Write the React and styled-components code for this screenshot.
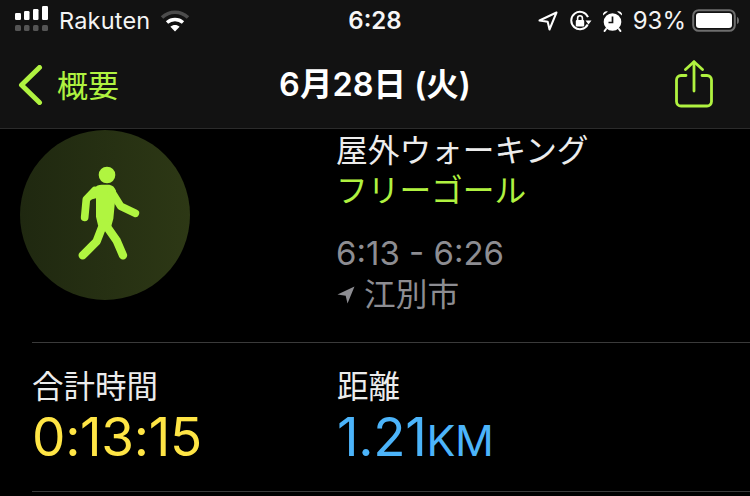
import React from "react";
import styled, { createGlobalStyle } from "styled-components";

const Global = createGlobalStyle`
  html, body { margin: 0; padding: 0; background: #000; }
  body { width: 750px; height: 496px; overflow: hidden; font-family: Inter, "Noto Sans CJK JP", sans-serif; }
`;
const CJK = `Inter, "Noto Sans CJK JP", sans-serif`;
const lime = "#b0f240";

const Page = styled.div`width:750px;height:496px;overflow:hidden;background:#000;display:flex;flex-direction:column;`;
const Header = styled.header`height:129px;box-sizing:border-box;background:#121212;border-bottom:1px solid #2b2b2b;display:flex;flex-direction:column;flex:none;`;
const StatusBar = styled.div`height:42px;display:grid;grid-template-columns:1fr auto 1fr;align-items:center;padding:0 10px;color:#fff;`;
const StatusLeft = styled.div`display:flex;align-items:center;padding-left:5px;`;
const StatusRight = styled.div`display:flex;align-items:center;justify-content:flex-end;`;
const Carrier = styled.span`font:400 23.5px/1 ${CJK};margin:0 10px 0 10px;letter-spacing:.2px;color:#f4f4f4;`;
const Clock = styled.span`font:600 24px/1 ${CJK};color:#f6f6f6;`;
const Percent = styled.span`font:400 24px/1 ${CJK};margin:0 6px 0 10px;color:#f4f4f4;`;
const NavBar = styled.nav`flex:1;display:grid;grid-template-columns:1fr auto 1fr;align-items:center;padding:0 18px;`;
const Back = styled.div`display:flex;align-items:center;gap:13px;color:${lime};font:400 31px/1 ${CJK};`;
const Title = styled.h1`margin:0;font:600 32.5px/1 ${CJK};color:#fff;`;
const ShareSlot = styled.div`display:flex;justify-content:flex-end;margin:0 19px 2px 0;`;

const Summary = styled.section`height:213px;box-sizing:border-box;flex:none;display:grid;grid-template-columns:316px 1fr;padding:1px 0 0 20px;`;
const Badge = styled.div`width:170px;height:170px;border-radius:50%;background:linear-gradient(90deg,#1f2810,#2d3815);`;
const Info = styled.div`display:flex;flex-direction:column;padding-top:1px;`;
const Line = styled.div`font:400 ${p=>p.$size||31.7}px/40px ${CJK};color:${p=>p.$color||"#ececec"};margin-top:${p=>p.$top||0}px;display:flex;align-items:center;gap:${p=>p.$gap||0}px;`;
const Rule = styled.hr`border:0;height:1px;background:#3a3a3a;margin:0 0 0 32px;flex:none;`;
const Stats = styled.section`height:148px;flex:none;box-sizing:border-box;display:grid;grid-template-columns:305px 1fr;padding:24px 0 0 32px;`;
const Stat = styled.div`display:flex;flex-direction:column;`;
const Label = styled.div`font:400 31.5px/40px ${CJK};color:#ececec;`;
const Value = styled.div`font:400 53px/60px ${CJK};color:${p=>p.$color};letter-spacing:-.3px;`;
const Unit = styled.span`font-size:43px;`;

const Signal = () => (
  <svg width="34" height="26" viewBox="0 0 34 26" style={{display:"block",marginBottom:4}} fill="#fff">
    <rect x="0" y="7" width="6" height="7" rx="1.2"/><rect x="9" y="5" width="5.5" height="9" rx="1.2"/>
    <rect x="18" y="3" width="5.5" height="11" rx="1.2"/><rect x="27" y="0" width="6" height="14" rx="1.2"/>
    <g fill="#555"><rect x="0" y="19" width="6" height="6" rx="1.5"/><rect x="9" y="19" width="5.5" height="6" rx="1.5"/><rect x="18" y="19" width="5.5" height="6" rx="1.5"/><rect x="27" y="19" width="6" height="6" rx="1.5"/></g>
  </svg>
);
const Wifi = () => (
  <svg width="30" height="24" viewBox="0 0 30 24" fill="none" strokeLinecap="butt">
    <path d="M2 8.5C9.5 1.5 20.5 1.5 28 8.5" stroke="#4c4c4c" strokeWidth="3.6"/>
    <path d="M7 13.5C11.5 9.5 18.5 9.5 23 13.5" stroke="#fff" strokeWidth="3.4"/>
    <path d="M15 22.5L10.4 17.8C13 15.4 17 15.4 19.6 17.8Z" fill="#fff"/>
  </svg>
);
const LocationArrow = ({size=20,color="#fff",solid}) => (
  <svg width={size} height={size} viewBox="0 0 20 20" fill={solid?color:"none"} stroke={color} strokeWidth={solid?0:2} strokeLinejoin="round">
    <path d="M18.5 1.5L1.5 9.5L9.7 10.8L11.5 18.5Z"/>
  </svg>
);
const RotationLock = () => (
  <svg width="23" height="23" viewBox="0 0 23 23" style={{marginLeft:11}} fill="none">
    <path d="M18.7 14.5A8.7 8.7 0 1 1 19 7.2" stroke="#fff" strokeWidth="2"/>
    <path d="M22.5 10.5L16.5 10.5L19.5 14.5Z" fill="#fff"/>
    <rect x="6.8" y="10" width="8.4" height="6.6" rx="1" fill="#fff"/>
    <path d="M8.6 10V8.2a2.4 2.4 0 0 1 4.8 0V10" stroke="#fff" strokeWidth="1.6"/>
  </svg>
);
const Alarm = () => (
  <svg width="21" height="22" viewBox="0 0 21 22" style={{marginLeft:10}}>
    <circle cx="10.5" cy="12" r="8.8" fill="#fff"/>
    <path d="M1 5.5A3.6 3.6 0 0 1 6 1.5ZM20 5.5A3.6 3.6 0 0 0 15 1.5Z" fill="#fff"/>
    <path d="M10.5 6.5V12.5H6.5" stroke="#121212" strokeWidth="1.7" fill="none"/>
    <path d="M4 19L2.6 21M17 19L18.4 21" stroke="#fff" strokeWidth="2" strokeLinecap="round"/>
  </svg>
);
const Battery = () => (
  <svg width="48" height="24" viewBox="0 0 48 24">
    <rect x="1.2" y="1.2" width="41.6" height="20.6" rx="5.5" fill="none" stroke="#6e6e6e" strokeWidth="2"/>
    <rect x="4" y="4" width="36" height="15" rx="3" fill="#fff"/>
    <path d="M45 8C46.5 8.5 47 10 47 11.5S46.5 14.5 45 15Z" fill="#6e6e6e"/>
  </svg>
);
const Chevron = () => (
  <svg width="26" height="40" viewBox="0 0 26 40" fill="none" stroke={lime} strokeWidth="5" strokeLinecap="round" strokeLinejoin="round">
    <path d="M21.5 2.5L3.5 20L21.5 37.5"/>
  </svg>
);
const Share = () => (
  <svg width="38" height="48" viewBox="0 0 38 48" fill="none" stroke={lime} strokeWidth="2.8" strokeLinecap="round" strokeLinejoin="round">
    <path d="M11 15.5H6a4.5 4.5 0 0 0-4.5 4.5v21.5A4.5 4.5 0 0 0 6 46h26a4.5 4.5 0 0 0 4.5-4.5V20A4.5 4.5 0 0 0 32 15.5h-5"/>
    <path d="M19 31V2"/><path d="M10.5 9.5L19 1.8L27.5 9.5"/>
  </svg>
);
const Walker = () => (
  <svg width="170" height="170" viewBox="60 30 510 510" style={{display:"block"}} fill="none" stroke="#b0f540" strokeLinecap="round" strokeLinejoin="round">
    <circle cx="321" cy="165" r="25" fill="#b0f540" stroke="none"/>
    <path d="M282 204Q292 194 305 194H328Q342 196 348 212L340 296L334 318L312 334L294 316L288 290L288 235L268 240Z" fill="#b0f540" stroke="none"/>
    <path d="M284 212L259 238L254 292" strokeWidth="23"/>
    <path d="M335 215L362 259L406 280" strokeWidth="23"/>
    <path d="M310 312L290 364L248 406" strokeWidth="25"/>
    <path d="M318 316L350 362L369 406" strokeWidth="25"/>
  </svg>
);

export default function App(){
  return (<>
    <Global/>
    <Page>
      <Header>
        <StatusBar>
          <StatusLeft><Signal/><Carrier>Rakuten</Carrier><Wifi/></StatusLeft>
          <Clock>6:28</Clock>
          <StatusRight><LocationArrow/><RotationLock/><Alarm/><Percent>93%</Percent><Battery/></StatusRight>
        </StatusBar>
        <NavBar>
          <Back><Chevron/>概要</Back>
          <Title>6月28日 (火)</Title>
          <ShareSlot><Share/></ShareSlot>
        </NavBar>
      </Header>
      <Summary>
        <Badge><Walker/></Badge>
        <Info>
          <Line>屋外ウォーキング</Line>
          <Line $color={lime}>フリーゴール</Line>
          <Line $color="#8d8d92" $top={22} $size={33}>6:13 - 6:26</Line>
          <Line $color="#8d8d92" $top={2} $gap={8}><LocationArrow size={20} color="#8d8d92" solid/>江別市</Line>
        </Info>
      </Summary>
      <Rule/>
      <Stats>
        <Stat><Label>合計時間</Label><Value $color="#ffe545">0:13:15</Value></Stat>
        <Stat><Label>距離</Label><Value $color="#4cb4fa">1.21<Unit>KM</Unit></Value></Stat>
      </Stats>
      <Rule/>
    </Page>
  </>);
}
